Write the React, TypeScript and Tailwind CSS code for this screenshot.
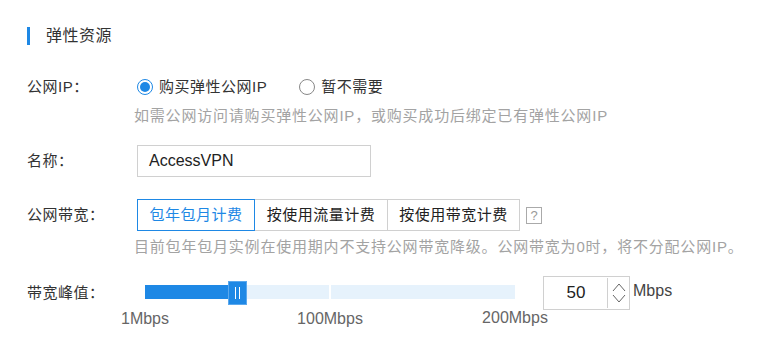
import React from 'react';

const font = { fontFamily: '"Liberation Sans", "Noto Sans CJK SC", sans-serif' };

function Radio({ checked, label }: { checked?: boolean; label: string }) {
  return (
    <label className="flex items-center h-[22px] text-[15px] tracking-[0.5px] text-[#333]">
      <span
        className={
          'w-[16px] h-[16px] rounded-full border flex items-center justify-center mr-[6px] ' +
          (checked ? 'border-[#1e88e5]' : 'border-[#888]')
        }
      >
        {checked && <span className="w-[10px] h-[10px] rounded-full bg-[#1e88e5]" />}
      </span>
      {label}
    </label>
  );
}

export default function App() {
  return (
    <div className="w-[772px] h-[346px] bg-white pl-[27px] pt-[27px] text-[#333]" style={font}>
      <div className="flex items-center h-[18px]">
        <div className="w-[3px] h-[18px] bg-[#1e88e5]" />
        <span className="ml-[16px] text-[16px] tracking-[0.5px] leading-[18px]">弹性资源</span>
      </div>

      {/* 公网IP */}
      <div className="flex items-center mt-[31px] h-[22px]">
        <div className="w-[110px] text-[15px] tracking-[0.5px]">公网IP：</div>
        <div className="flex items-center gap-[32px]">
          <Radio checked label="购买弹性公网IP" />
          <Radio label="暂不需要" />
        </div>
      </div>
      <div className="ml-[107px] mt-[8px] h-[20px] leading-[20px] text-[15px] tracking-[0.8px] text-[#a3a3a3]">
        如需公网访问请购买弹性公网IP，或购买成功后绑定已有弹性公网IP
      </div>

      {/* 名称 */}
      <div className="flex items-center mt-[19px] h-[32px]">
        <div className="w-[110px] text-[15px] tracking-[0.5px]">名称：</div>
        <div className="w-[234px] h-[32px] border border-[#d0d0d0] flex items-center px-[11px] text-[16px] text-[#222]">
          AccessVPN
        </div>
      </div>

      {/* 公网带宽 */}
      <div className="flex items-center mt-[22px] h-[32px]">
        <div className="w-[110px] text-[15px] tracking-[0.5px]">公网带宽：</div>
        <div className="flex h-[32px] text-[15px] tracking-[0.5px]">
          <div className="w-[118px] border border-[#1e88e5] text-[#1e88e5] flex items-center justify-center">
            包年包月计费
          </div>
          <div className="w-[133px] border-y border-r border-[#d0d0d0] flex items-center justify-center text-[#222]">
            按使用流量计费
          </div>
          <div className="w-[132px] border-y border-r border-[#d0d0d0] flex items-center justify-center text-[#222]">
            按使用带宽计费
          </div>
        </div>
        <div className="ml-[6px] w-[16px] h-[17px] border border-[#aaa] text-[#999] text-[13px] leading-[15px] flex items-center justify-center">
          ?
        </div>
      </div>
      <div className="ml-[107px] mt-[6px] h-[20px] leading-[20px] text-[15px] tracking-[0.8px] text-[#a3a3a3]">
        目前包年包月实例在使用期内不支持公网带宽降级。公网带宽为0时，将不分配公网IP。
      </div>

      {/* 带宽峰值 */}
      <div className="flex items-center mt-[19px] h-[34px]">
        <div className="w-[110px] text-[15px] tracking-[0.5px]">带宽峰值：</div>
        <div className="relative w-[378px] h-[34px]">
          <div className="absolute left-[8px] top-[9px] w-[370px] h-[14px] bg-[#e6f2fc] flex">
            <div className="w-[85px] h-full bg-[#1e88e5]" />
            <div className="absolute left-[184px] top-0 w-[2px] h-full bg-white" />
          </div>
          <div className="absolute left-[91px] top-[5px] w-[19px] h-[24px] bg-[#1e88e5] border border-[#5aa8ee] flex items-center justify-center gap-[3px]">
            <span className="w-[1px] h-[12px] bg-white" />
            <span className="w-[1px] h-[12px] bg-white" />
          </div>
          <span className="absolute left-[8px] top-[31px] -translate-x-1/2 text-[16px] text-[#666] whitespace-nowrap">1Mbps</span>
          <span className="absolute left-[193px] top-[31px] -translate-x-1/2 text-[16px] text-[#666] whitespace-nowrap">100Mbps</span>
          <span className="absolute left-[378px] top-[30px] -translate-x-1/2 text-[16px] text-[#666] whitespace-nowrap">200Mbps</span>
        </div>
        <div className="ml-[28px] w-[87px] h-[34px] border border-[#d0d0d0] flex">
          <div className="flex-1 flex items-center justify-center text-[17px] text-[#222] pl-[1px]">50</div>
          <div className="w-[22px] border-l border-[#d0d0d0] my-[1px] flex flex-col items-center justify-center">
            <svg width="14" height="12" viewBox="0 0 14 12"><path d="M1 10 L7 3 L13 10" fill="none" stroke="#666" strokeWidth="1" /></svg>
            <svg width="14" height="12" viewBox="0 0 14 12"><path d="M1 2 L7 9 L13 2" fill="none" stroke="#666" strokeWidth="1" /></svg>
          </div>
        </div>
        <span className="ml-[3px] text-[16px] text-[#444] -mt-[4px]">Mbps</span>
      </div>
    </div>
  );
}
